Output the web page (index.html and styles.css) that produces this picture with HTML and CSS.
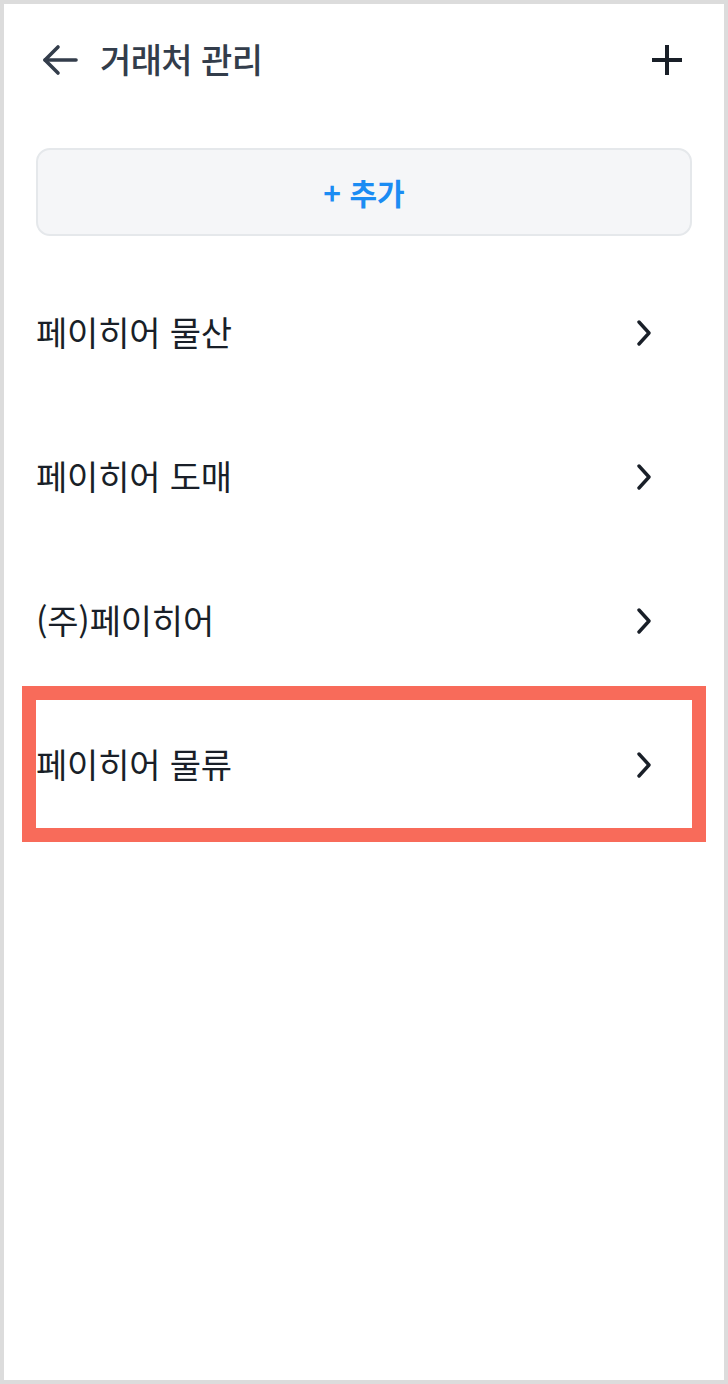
FILE: index.html
```html
<!DOCTYPE html>
<html lang="ko">

<head>
    <meta charset="UTF-8">
    <meta name="viewport" content="width=device-width, initial-scale=1.0">
    <title>거래처 관리</title>
    <link rel="stylesheet" href="styles.css">
</head>

<body>
    <div class="screen">
        <div class="header">
            <button class="iconButton backButton" aria-label="뒤로">
                <svg width="36" height="32" viewBox="0 0 36 32" fill="none" stroke="#333d4b" stroke-width="3.6" stroke-linecap="round" stroke-linejoin="round">
                    <path d="M34 16H3"/>
                    <path d="M16 3L3 16L16 29"/>
                </svg>
            </button>
            <h1 class="title">거래처 관리</h1>
            <button class="iconButton plusButton" aria-label="추가">
                <svg width="30" height="30" viewBox="0 0 30 30" fill="none" stroke="#191f28" stroke-width="4">
                    <path d="M15 0V30"/>
                    <path d="M0 15H30"/>
                </svg>
            </button>
        </div>

        <button class="addButton">+ 추가</button>

        <ul class="clientList">
            <li class="clientRow">
                <span>페이히어 물산</span>
                <svg class="chevron" width="16" height="26" viewBox="0 0 16 26" fill="none" stroke="#191f28" stroke-width="3.4" stroke-linecap="round" stroke-linejoin="round"><path d="M3 2L13 13L3 24"/></svg>
            </li>
            <li class="clientRow">
                <span>페이히어 도매</span>
                <svg class="chevron" width="16" height="26" viewBox="0 0 16 26" fill="none" stroke="#191f28" stroke-width="3.4" stroke-linecap="round" stroke-linejoin="round"><path d="M3 2L13 13L3 24"/></svg>
            </li>
            <li class="clientRow">
                <span>(주)페이히어</span>
                <svg class="chevron" width="16" height="26" viewBox="0 0 16 26" fill="none" stroke="#191f28" stroke-width="3.4" stroke-linecap="round" stroke-linejoin="round"><path d="M3 2L13 13L3 24"/></svg>
            </li>
            <li class="clientRow highlighted">
                <span>페이히어 물류</span>
                <svg class="chevron" width="16" height="26" viewBox="0 0 16 26" fill="none" stroke="#191f28" stroke-width="3.4" stroke-linecap="round" stroke-linejoin="round"><path d="M3 2L13 13L3 24"/></svg>
            </li>
        </ul>
    </div>
</body>

</html>
```

FILE: styles.css
```css
html,
body {
    margin: 0;
    padding: 0;
}

body {
    font-family: "Noto Sans CJK KR", "Noto Sans", sans-serif;
    background-color: #ffffff;
}

.screen {
    box-sizing: border-box;
    width: 728px;
    height: 1384px;
    border: 4px solid #dcdcdc;
    padding: 0 32px;
    background-color: #ffffff;
}

.header {
    display: flex;
    align-items: center;
    height: 112px;
}

.iconButton {
    border: none;
    background: none;
    padding: 0;
    display: flex;
    align-items: center;
    justify-content: center;
}

.backButton {
    margin-left: 6px;
}

.title {
    margin: 0 0 4px 22px;
    flex: 1;
    font-size: 34px;
    font-weight: 500;
    color: #333d4b;
    letter-spacing: -0.6px;
}

.plusButton {
    margin-right: 10px;
}

.addButton {
    display: block;
    box-sizing: border-box;
    width: 656px;
    height: 88px;
    margin-top: 32px;
    border: 2px solid #e5e8eb;
    border-radius: 14px;
    background-color: #f5f6f8;
    color: #1b8cf3;
    font-family: inherit;
    font-size: 30px;
    font-weight: 700;
}

.clientList {
    list-style: none;
    margin: 25px 0 0 0;
    padding: 0;
    width: 656px;
}

.clientRow {
    position: relative;
    display: flex;
    align-items: center;
    justify-content: space-between;
    height: 144px;
    font-size: 34px;
    color: #191f28;
    letter-spacing: -0.2px;
}

.clientRow span {
    margin-bottom: 3px;
}

.chevron {
    margin-right: 40px;
}

.highlighted::after {
    content: "";
    position: absolute;
    top: -7px;
    left: -14px;
    right: -14px;
    bottom: -5px;
    border: 14px solid #f86b5a;
}
```
